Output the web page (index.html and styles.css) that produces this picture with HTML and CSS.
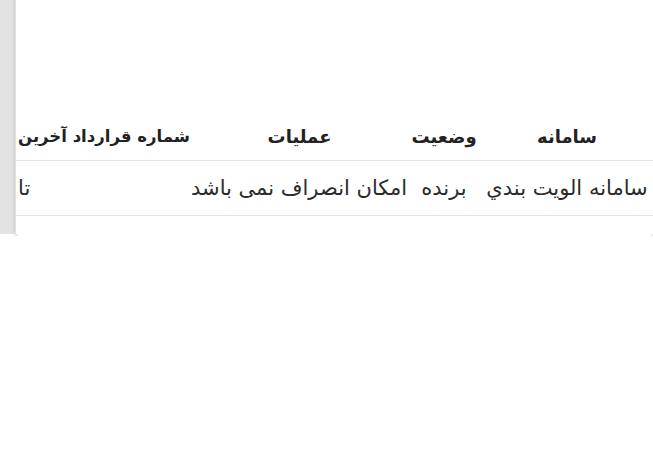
FILE: index.html
```html
<!DOCTYPE html>
<html lang="fa">
<head>
<meta charset="utf-8">
<link rel="stylesheet" href="styles.css">
</head>
<body>
<div class="page">
  <div class="rail"></div>
  <div class="card">
    <table class="grid" dir="rtl">
      <colgroup>
        <col class="c1"><col class="c2"><col class="c3"><col class="c4">
      </colgroup>
      <thead>
        <tr>
          <th>سامانه</th>
          <th>وضعیت</th>
          <th>عملیات</th>
          <th class="long">شماره قرارداد آخرین</th>
        </tr>
      </thead>
      <tbody>
        <tr>
          <td>سامانه الويت بندي</td>
          <td>برنده</td>
          <td>امکان انصراف نمی باشد</td>
          <td class="end">تا</td>
        </tr>
      </tbody>
    </table>
  </div>
</div>
</body>
</html>
```

FILE: styles.css
```css
html, body {
  margin: 0;
  padding: 0;
  background: #ffffff;
  overflow: hidden;
}
body {
  font-family: "DejaVu Sans", "Noto Sans", sans-serif;
}
.page {
  display: flex;
  align-items: flex-start;
  width: 653px;
}
.rail {
  width: 15px;
  height: 234px;
  background: #e3e3e3;
  flex: none;
}
.card {
  flex: 1;
  margin-left: 1px;
  margin-top: -6px;
  height: 242px;
  background: #ffffff;
  border-radius: 4px;
  box-shadow: 0 1px 4px rgba(0, 0, 0, 0.3);
  padding-top: 119px;
  box-sizing: border-box;
  overflow: hidden;
}
.grid {
  width: 637px;
  border-collapse: collapse;
  table-layout: fixed;
}
.c1 { width: 172px; }
.c2 { width: 74px; }
.c3 { width: 215px; }
.c4 { width: 176px; }
.grid th {
  height: 47px;
  padding: 0;
  font-size: 18px;
  font-weight: bold;
  color: #222222;
  text-align: center;
  white-space: nowrap;
  border-bottom: 1px solid #e6e6e6;
  vertical-align: middle;
}
.grid th.long {
  font-size: 16.5px;
}
.grid td {
  height: 54px;
  padding: 0;
  font-size: 21px;
  color: #2b2b2b;
  text-align: center;
  white-space: nowrap;
  border-bottom: 1px solid #e6e6e6;
  vertical-align: middle;
}
.grid td.end {
  text-align: left;
  padding-left: 2px;
}
```
